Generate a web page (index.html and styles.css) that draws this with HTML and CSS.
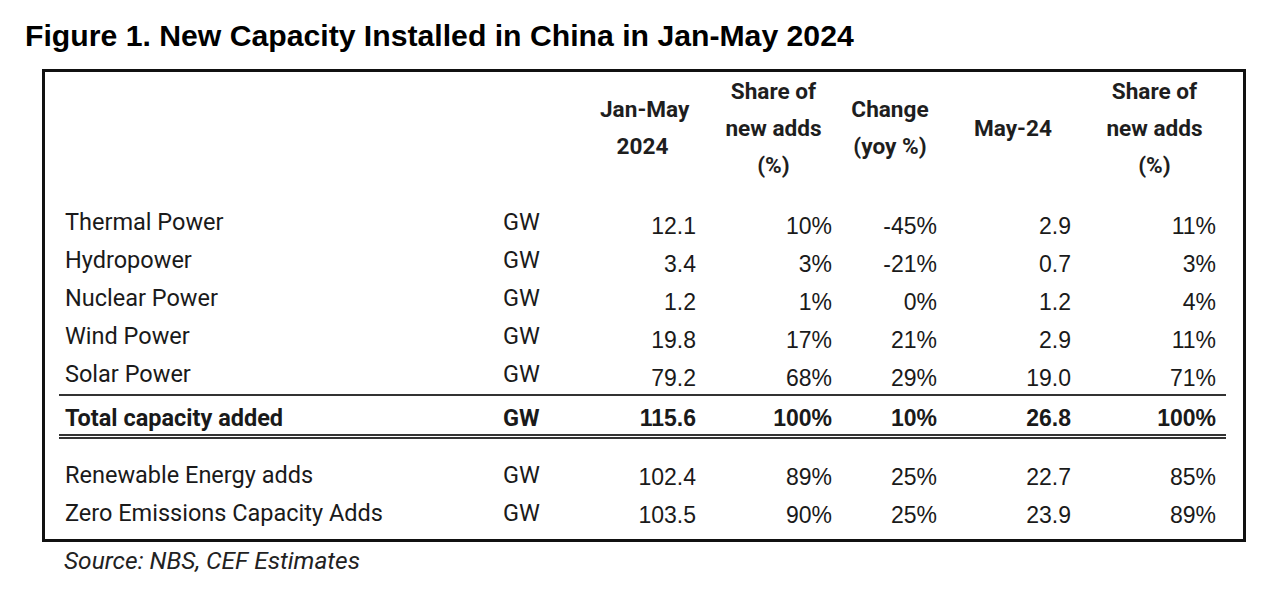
FILE: index.html
```html
<!DOCTYPE html>
<html lang="en">
<head>
<meta charset="utf-8">
<title>Figure 1. New Capacity Installed in China in Jan-May 2024</title>
<link rel="stylesheet" href="styles.css">
</head>
<body>
<h1 class="title">Figure 1. New Capacity Installed in China in Jan-May 2024</h1>
<div class="box">
  <div class="row head">
    <div></div>
    <div></div>
    <div class="h h1">Jan-May<br>2024</div>
    <div class="h h2">Share of<br>new adds<br>(%)</div>
    <div class="h h3">Change<br>(yoy %)</div>
    <div class="h h4">May-24</div>
    <div class="h h5">Share of<br>new adds<br>(%)</div>
  </div>

  <div class="row data">
    <div class="lab name">Thermal Power</div><div class="lab">GW</div>
    <div class="num">12.1</div><div class="num">10%</div><div class="num">-45%</div><div class="num">2.9</div><div class="num last">11%</div>
  </div>
  <div class="row data">
    <div class="lab name">Hydropower</div><div class="lab">GW</div>
    <div class="num">3.4</div><div class="num">3%</div><div class="num">-21%</div><div class="num">0.7</div><div class="num last">3%</div>
  </div>
  <div class="row data">
    <div class="lab name">Nuclear Power</div><div class="lab">GW</div>
    <div class="num">1.2</div><div class="num">1%</div><div class="num">0%</div><div class="num">1.2</div><div class="num last">4%</div>
  </div>
  <div class="row data">
    <div class="lab name">Wind Power</div><div class="lab">GW</div>
    <div class="num">19.8</div><div class="num">17%</div><div class="num">21%</div><div class="num">2.9</div><div class="num last">11%</div>
  </div>
  <div class="row data solar">
    <div class="lab name">Solar Power</div><div class="lab">GW</div>
    <div class="num">79.2</div><div class="num">68%</div><div class="num">29%</div><div class="num">19.0</div><div class="num last">71%</div>
  </div>

  <div class="row total">
    <div class="lab name">Total capacity added</div><div class="lab">GW</div>
    <div class="num">115.6</div><div class="num">100%</div><div class="num">10%</div><div class="num">26.8</div><div class="num last">100%</div>
  </div>

  <div class="row extra first">
    <div class="lab name">Renewable Energy adds</div><div class="lab">GW</div>
    <div class="num">102.4</div><div class="num">89%</div><div class="num">25%</div><div class="num">22.7</div><div class="num last">85%</div>
  </div>
  <div class="row extra">
    <div class="lab name">Zero Emissions Capacity Adds</div><div class="lab">GW</div>
    <div class="num">103.5</div><div class="num">90%</div><div class="num">25%</div><div class="num">23.9</div><div class="num last">89%</div>
  </div>
</div>
<p class="source">Source: NBS, CEF Estimates</p>
</body>
</html>
```

FILE: styles.css
```css
* { box-sizing: border-box; }

body {
  margin: 0;
  background: #ffffff;
  color: #1a1a1a;
  font-family: Roboto, "Liberation Sans", sans-serif;
}

.title {
  margin: 0;
  padding: 19px 0 0 25px;
  font-family: "Liberation Sans", Arial, sans-serif;
  font-weight: 700;
  font-size: 30.2px;
  line-height: 34px;
  color: #000;
}

.box {
  margin: 16px 0 0 42px;
  width: 1204px;
  border: 3px solid #111;
  padding: 0 17px 7px 14px;
}

.row {
  display: grid;
  grid-template-columns: 444px 97px 96px 136px 105px 134px 155px;
  align-items: center;
}

.head {
  height: 112px;
  margin-bottom: 20px;
}

.h {
  font-family: Roboto, sans-serif;
  font-weight: 700;
  font-size: 22.6px;
  line-height: 37px;
  text-align: center;
  white-space: nowrap;
  color: #1e1e1e;
}
.h1 { padding-right: 11px; }
.h2 { padding-left: 19px; }
.h3 { padding-left: 11px; }
.h4 { padding-left: 18px; }
.h5 { padding-left: 12px; }

.data, .extra { height: 38px; }

.lab {
  font-family: Roboto, sans-serif;
  font-size: 23.5px;
  line-height: 28px;
  white-space: nowrap;
}
.name { padding-left: 6px; }

.num {
  font-family: "Liberation Sans", Arial, sans-serif;
  font-size: 23px;
  line-height: 28px;
  text-align: right;
}
.last { padding-right: 10px; }

.data .lab { padding-bottom: 3px; }
.data .num { padding-top: 5px; }

.data.solar {
  height: 40px;
  border-bottom: 2px solid #333;
}

.total {
  height: 43px;
  font-weight: 700;
  border-bottom: 5px double #333;
}
.total .lab, .total .num { padding-top: 6px; }

.extra.first { margin-top: 17px; }
.extra .num { padding-top: 3px; }

.source {
  margin: 5px 0 0 64px;
  font-family: Roboto, sans-serif;
  font-style: italic;
  font-size: 24.5px;
  line-height: 28px;
  color: #222;
}
```
